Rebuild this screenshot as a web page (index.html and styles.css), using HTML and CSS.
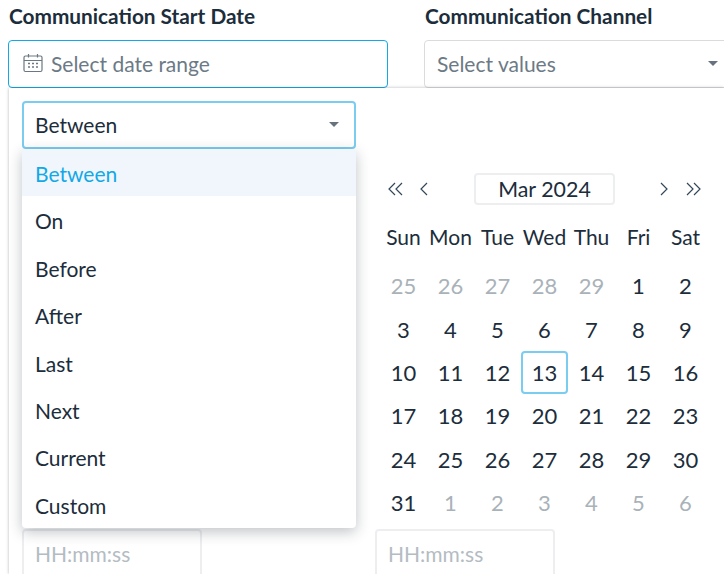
FILE: index.html
```html
<!DOCTYPE html>
<html lang="en">
<head>
  <meta charset="UTF-8">
  <meta name="viewport" content="width=device-width, initial-scale=1.0">
  <title>Communication Filters</title>
  <link rel="stylesheet" href="styles.css">
</head>
<body>
  <div class="filters">
    <div class="field date-field">
      <label class="field-label">Communication Start Date</label>
      <div class="input active">
        <svg class="cal-icon" width="20" height="20" viewBox="0 0 20 20" fill="none" stroke="#6b7883" stroke-width="1.2">
          <rect x="1" y="3" width="18" height="15.5" rx="1.5"/>
          <path d="M1 7.5h18M5.5 1v3.5M14.5 1v3.5"/>
          <path d="M5 10.5h2M9 10.5h2M13 10.5h2M5 14h2M9 14h2M13 14h2" stroke-width="1.6"/>
        </svg>
        <span class="placeholder">Select date range</span>
      </div>
    </div>
    <div class="field channel-field">
      <label class="field-label">Communication Channel</label>
      <div class="input">
        <span class="placeholder">Select values</span>
        <span class="caret"></span>
      </div>
    </div>
  </div>

  <div class="panel">
    <div class="range-select">
      <span>Between</span>
      <span class="caret"></span>
    </div>

    <div class="calendars">
      <div class="cal-col">
        <div class="cal-spacer"></div>
        <div class="time-input">HH:mm:ss</div>
      </div>
      <div class="cal-col">
        <div class="cal-spacer">
          <div class="cal-nav">
            <div class="nav-left">
              <svg width="18" height="14" viewBox="0 0 18 14" fill="none" stroke="#33475a" stroke-width="1.2"><path d="M8 1L2 7l6 6M15 1L9 7l6 6"/></svg>
              <svg width="10" height="14" viewBox="0 0 10 14" fill="none" stroke="#33475a" stroke-width="1.2"><path d="M8 1L2 7l6 6"/></svg>
            </div>
            <div class="month-btn">Mar 2024</div>
            <div class="nav-right">
              <svg width="10" height="14" viewBox="0 0 10 14" fill="none" stroke="#33475a" stroke-width="1.2"><path d="M2 1l6 6-6 6"/></svg>
              <svg width="18" height="14" viewBox="0 0 18 14" fill="none" stroke="#33475a" stroke-width="1.2"><path d="M3 1l6 6-6 6M10 1l6 6-6 6"/></svg>
            </div>
          </div>
          <div class="week-head">
            <span>Sun</span><span>Mon</span><span>Tue</span><span>Wed</span><span>Thu</span><span>Fri</span><span>Sat</span>
          </div>
          <div class="days">
            <span class="muted">25</span><span class="muted">26</span><span class="muted">27</span><span class="muted">28</span><span class="muted">29</span><span>1</span><span>2</span>
            <span>3</span><span>4</span><span>5</span><span>6</span><span>7</span><span>8</span><span>9</span>
            <span>10</span><span>11</span><span>12</span><span class="today">13</span><span>14</span><span>15</span><span>16</span>
            <span>17</span><span>18</span><span>19</span><span>20</span><span>21</span><span>22</span><span>23</span>
            <span>24</span><span>25</span><span>26</span><span>27</span><span>28</span><span>29</span><span>30</span>
            <span>31</span><span class="muted">1</span><span class="muted">2</span><span class="muted">3</span><span class="muted">4</span><span class="muted">5</span><span class="muted">6</span>
          </div>
        </div>
        <div class="time-input">HH:mm:ss</div>
      </div>
    </div>

    <ul class="menu">
      <li class="selected">Between</li>
      <li>On</li>
      <li>Before</li>
      <li>After</li>
      <li>Last</li>
      <li>Next</li>
      <li>Current</li>
      <li>Custom</li>
    </ul>
  </div>
</body>
</html>
```

FILE: styles.css
```css
html, body {
  height: 100%;
}

body {
  margin: 0;
  overflow: hidden;
  background: #fff;
  color: #1c2d3b;
  font-family: Lato, "Liberation Sans", sans-serif;
  font-size: 21px;
}

.filters {
  display: flex;
  gap: 36px;
  padding: 4px 0 0 8px;
}

.field-label {
  display: block;
  height: 36px;
  line-height: 24px;
  padding-left: 1px;
  font-weight: 700;
  font-size: 20.8px;
}

.date-field {
  width: 380px;
  flex: none;
}

.channel-field {
  width: 308px;
  flex: none;
}

.input {
  display: flex;
  align-items: center;
  height: 48px;
  box-sizing: border-box;
  padding: 0 13px 2px 14px;
  border: 1px solid #d9dcdf;
  border-radius: 4px;
  background: #fff;
}

.channel-field .input {
  padding-left: 12px;
}

.input.active {
  border-color: #12a9e6;
}

.cal-icon {
  margin-right: 8px;
  flex: none;
}

.placeholder {
  color: #6c7a86;
}

.caret {
  width: 0;
  height: 0;
  margin-left: auto;
  border-left: 5px solid transparent;
  border-right: 5px solid transparent;
  border-top: 5px solid #66737f;
}

.panel {
  position: relative;
  margin-left: 9px;
  height: 486px;
  box-sizing: border-box;
  padding: 13px 0 0 13px;
  background: #fff;
  box-shadow: 0 0 3px rgba(40, 50, 60, 0.35);
}

.range-select {
  display: flex;
  align-items: center;
  width: 334px;
  height: 48px;
  box-sizing: border-box;
  padding: 0 15px 2px 11px;
  border: 2px solid #7accf0;
  border-radius: 4px;
}

.calendars {
  display: flex;
}

.cal-col {
  width: 353px;
  flex: none;
}

.cal-spacer {
  height: 380px;
  box-sizing: border-box;
  padding-top: 24px;
}

.cal-nav {
  display: flex;
  align-items: center;
  width: 322px;
  height: 32px;
  margin-left: 12px;
}

.nav-left, .nav-right {
  display: flex;
  align-items: center;
}

.nav-left {
  gap: 14px;
}

.nav-right {
  gap: 15px;
}

.month-btn {
  width: 141px;
  height: 32px;
  margin: 0 44px 0 45px;
  flex: none;
  box-sizing: border-box;
  border: 2px solid #eceef0;
  border-radius: 4px;
  text-align: center;
  line-height: 29px;
  font-size: 21.4px;
}

.week-head, .days {
  display: grid;
  grid-template-columns: repeat(7, 47px);
  margin-left: 5px;
  text-align: center;
}

.week-head {
  height: 43px;
  margin-top: 16px;
  line-height: 32px;
}

.days {
  grid-auto-rows: 43.4px;
  font-size: 22px;
}

.days span {
  display: flex;
  align-items: center;
  justify-content: center;
  box-sizing: border-box;
}

.days .muted {
  color: #a9b2b9;
}

.days .today {
  border: 2px solid #7accf0;
  border-radius: 4px;
}

.time-input {
  width: 180px;
  height: 60px;
  box-sizing: border-box;
  padding: 10px 0 0 11px;
  border: 2px solid #eceef0;
  border-radius: 4px;
  color: #b4bcc3;
  font-size: 21px;
}

.menu {
  position: absolute;
  top: 61px;
  left: 13px;
  width: 334px;
  height: 379px;
  box-sizing: border-box;
  margin: 0;
  padding: 0;
  list-style: none;
  background: #fff;
  border-radius: 4px;
  box-shadow: 0 4px 14px rgba(30, 40, 50, 0.28);
}

.menu li {
  height: 47.4px;
  padding-left: 13px;
  line-height: 49px;
}

.menu .selected {
  color: #12a9e6;
  background: #f1f6fd;
}
```
